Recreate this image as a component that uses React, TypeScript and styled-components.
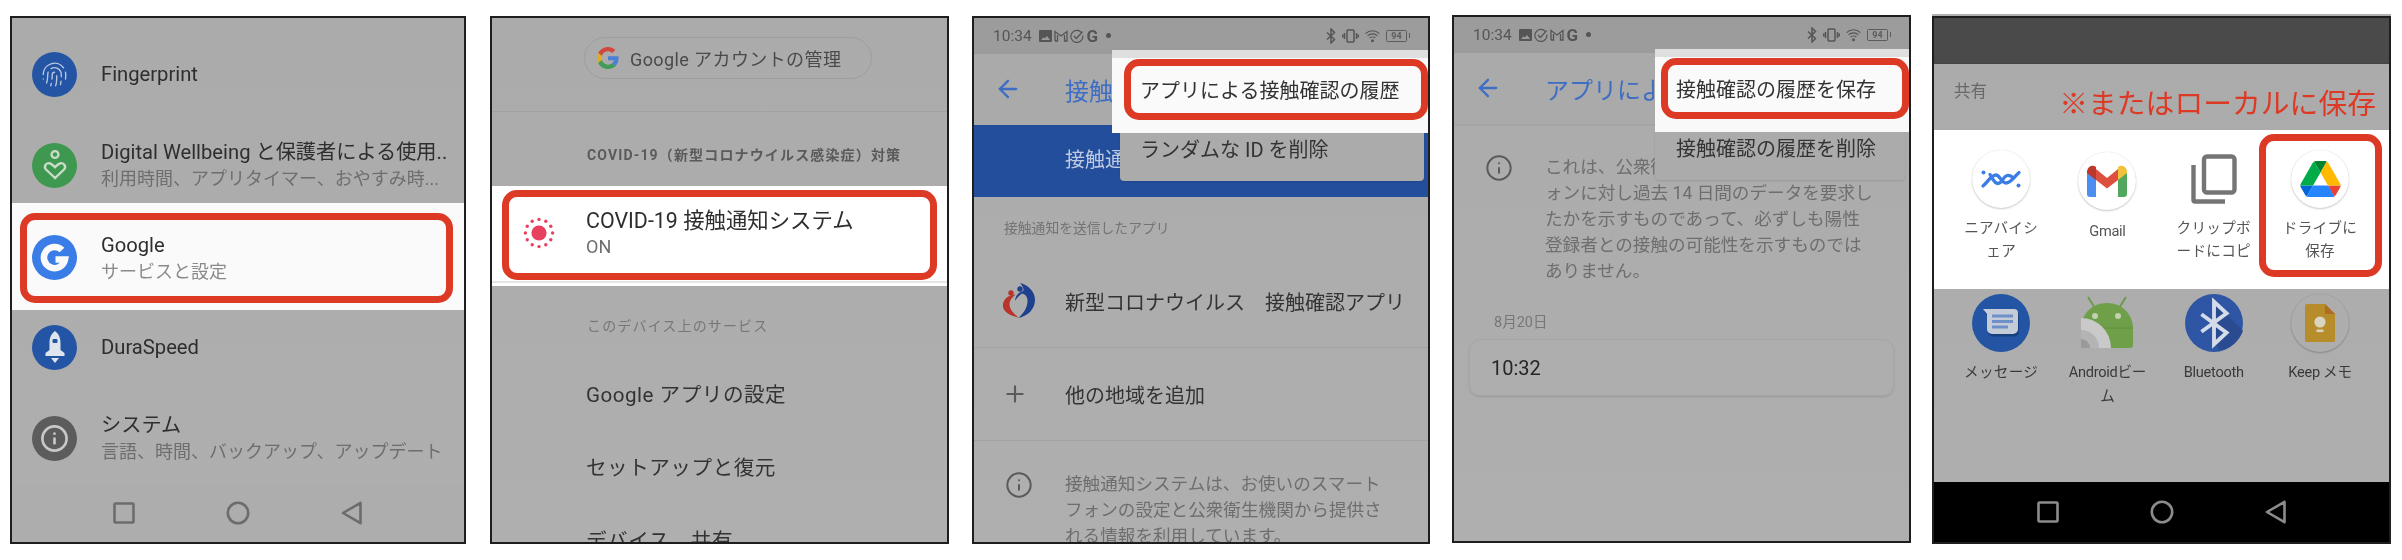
import React from "react";
import styled, { createGlobalStyle } from "styled-components";
import { ArrowLeft, Fingerprint, Info, Plus } from "lucide-react";

const GlobalStyle = createGlobalStyle`
  html, body {
    margin: 0;
    padding: 0;
    background: #fff;
  }
  * {
    box-sizing: border-box;
  }
`;

const RED = "#dd3a26";
const FONT = `Roboto, "Noto Sans CJK JP", sans-serif`;

/* page + frames */
const Page = styled.main`
  display: flex;
  align-items: flex-start;
  width: 2402px;
  height: 560px;
  padding-left: 10px;
  overflow: hidden;
  font-family: ${FONT};
`;

const Frame = styled.section<{ $ml: number; $mt: number; $w: number; $cap?: boolean }>`
  position: relative;
  display: flex;
  flex-direction: column;
  flex: none;
  width: ${(p) => p.$w}px;
  height: 528px;
  margin-left: ${(p) => p.$ml}px;
  margin-top: ${(p) => p.$mt}px;
  border: 2px solid #1e1e1e;
  background: linear-gradient(#ababab, #afafaf);
  overflow: hidden;
  filter: blur(0.45px);
  box-shadow: ${(p) => (p.$cap ? "0 -2px 0 #b0b0b0" : "none")};
`;

const Ring = styled.div`
  flex: 1;
  display: flex;
  align-items: center;
  border: 7px solid ${RED};
  border-radius: 15px;
  background: #fafafa;
`;

/* Frame 1: settings list */
const SettingsList = styled.div`
  display: flex;
  flex-direction: column;
  padding-top: 10.5px;
  flex: 1;
`;

const SettingRow = styled.div`
  display: flex;
  align-items: center;
  gap: 24px;
  height: 91px;
  padding-left: 20px;
`;

const Disc = styled.div<{ $bg: string }>`
  flex: none;
  display: flex;
  align-items: center;
  justify-content: center;
  width: 45px;
  height: 45px;
  border-radius: 50%;
  background: ${(p) => p.$bg};
`;

const RowText = styled.div`
  display: flex;
  flex-direction: column;
  min-width: 0;
  white-space: nowrap;
`;

const Title = styled.div`
  font-size: 20.2px;
  line-height: 27px;
  color: #2e2e2e;
`;

const Sub = styled.div`
  font-size: 18px;
  line-height: 25px;
  color: #6e6e6e;
`;

const SettingBand = styled.div`
  position: relative;
  z-index: 1;
  display: flex;
  height: 107px;
  margin: -8px 0;
  padding: 10px 11px 7px 8px;
  background: #fafafa;

  ${Ring} {
    padding-left: 5px;
    gap: 24px;
  }
  ${Sub} {
    color: #8a8a8a;
  }
`;

const NavBar = styled.nav<{ $bg: string; $h: number }>`
  flex: none;
  display: grid;
  grid-template-columns: repeat(3, 114px);
  justify-content: center;
  justify-items: center;
  align-items: center;
  height: ${(p) => p.$h}px;
  background: ${(p) => p.$bg};
`;

/* Frame 2: Google settings */
const AccountHead = styled.div`
  flex: none;
  height: 94px;
  padding: 18.5px 0 0 92px;
  border-bottom: 1.5px solid #a2a2a2;
`;

const AccountPill = styled.div`
  display: flex;
  align-items: center;
  gap: 11px;
  width: 288px;
  height: 42px;
  padding-left: 12px;
  border: 1px solid #9e9e9e;
  border-radius: 21px;
  font-size: 18px;
  letter-spacing: 0.4px;
  color: #4a4a4a;
  white-space: nowrap;
`;

const SectionLabel = styled.div<{ $h: number; $pt: number; $bold?: boolean }>`
  flex: none;
  display: flex;
  align-items: center;
  height: ${(p) => p.$h}px;
  padding: ${(p) => p.$pt}px 0 0 95px;
  font-size: 14px;
  letter-spacing: 1.15px;
  font-weight: ${(p) => (p.$bold ? 700 : 400)};
  color: ${(p) => (p.$bold ? "#5a5a5a" : "#777")};
  white-space: nowrap;
`;

const CovidBand = styled.div`
  flex: none;
  display: flex;
  flex-direction: column;
  height: 100.5px;
  padding: 4.5px 10px 0;
  background: #fff;

  ${Ring} {
    background: #fff;
    padding: 0 0 4px 14px;
    gap: 31px;
  }
  ${Title} {
    font-size: 21.4px;
  }
  ${Sub} {
    font-size: 18px;
    line-height: 26px;
  }
`;

const BandRule = styled.div`
  flex: none;
  height: 2px;
  margin: 1px -10px 3px;
  background: #e6e6e6;
`;

const PlainRow = styled.div`
  flex: none;
  display: flex;
  align-items: center;
  height: 73px;
  padding-left: 94px;
  font-size: 20.6px;
  letter-spacing: 0.5px;
  color: #333;
  white-space: nowrap;
`;

/* Frame 3 + 4: exposure notification screens */
const StatusBar = styled.div`
  flex: none;
  display: flex;
  align-items: center;
  gap: 2px;
  height: 35.5px;
  padding: 0 18px 0 19px;
  background: #9c9c9c;
  color: #555;
`;

const Clock = styled.span`
  font-size: 15.5px;
  margin-right: 5px;
`;

const StatusG = styled.span`
  font-size: 17px;
  font-weight: 700;
  margin-left: 1px;
`;

const StatusDot = styled.span`
  width: 5px;
  height: 5px;
  margin-left: 6px;
  border-radius: 50%;
  background: #555;
`;

const StatusRight = styled.div`
  display: flex;
  align-items: center;
  gap: 6px;
  margin-left: auto;
`;

const AppBar = styled.header`
  flex: none;
  display: flex;
  align-items: center;
  height: 71.5px;
  padding-left: 20px;
  gap: 43px;
  font-size: 24px;
  color: #3e6ec4;
  background: #aaaaaa;
  box-shadow: 0 1px 2px rgba(0, 0, 0, 0.08);
`;

const AppBarTitle = styled.span<{ $w: number }>`
  width: ${(p) => p.$w}px;
  overflow: hidden;
  white-space: nowrap;
`;

const BlueBanner = styled.div`
  flex: none;
  height: 71.5px;
  padding-left: 91px;
  background: #234e9b;
  color: #bfcbe2;
  font-size: 20px;
  line-height: 71.5px;
`;

const BannerText = styled.span`
  display: block;
  width: 55px;
  overflow: hidden;
  white-space: nowrap;
`;

const GroupLabel = styled.div`
  flex: none;
  display: flex;
  align-items: center;
  height: 58.5px;
  padding: 2.5px 0 0 30px;
  font-size: 13.8px;
  color: #747474;
`;

const ListRow = styled.div<{ $divider?: boolean }>`
  flex: none;
  display: flex;
  align-items: center;
  height: 93px;
  font-size: 20px;
  color: #333;
  white-space: nowrap;
  border-bottom: ${(p) => (p.$divider ? "1.5px solid #a2a2a2" : "none")};
`;

const IconSlot = styled.div<{ $shift?: number }>`
  flex: none;
  display: flex;
  justify-content: center;
  width: 91px;
  padding-right: ${(p) => p.$shift ?? 2}px;
`;

const NoteRow = styled.div<{ $pt: number }>`
  display: flex;
  align-items: flex-start;
  padding-top: ${(p) => p.$pt}px;
  color: #5a5a5a;
`;

const NoteText = styled.p`
  margin: 0;
  width: 345px;
  font-size: 17.6px;
  line-height: 26.2px;
  color: #6e6e6e;
  white-space: nowrap;
`;

const DateLabel = styled.div`
  margin: 28.5px 0 0 40px;
  height: 20px;
  font-size: 14.5px;
  line-height: 20px;
  color: #777;
`;

const HistoryCard = styled.div`
  display: flex;
  align-items: center;
  width: 425px;
  height: 57px;
  margin: 6px 0 0 15px;
  padding-left: 21px;
  border: 1px solid #a6a6a6;
  border-radius: 11px;
  box-shadow: 0 1px 2px rgba(0, 0, 0, 0.12);
  font-size: 20px;
  color: #262626;
`;

const MenuOverlay = styled.div<{ $left: number }>`
  position: absolute;
  z-index: 2;
  left: ${(p) => p.$left}px;
  right: 0;
  top: 32px;
  font-size: 20px;
  color: #333;
  white-space: nowrap;
`;

const MenuBand = styled.div<{ $ringLeft: number; $textLeft: number }>`
  display: flex;
  height: 83px;
  padding: 9px 0 13px ${(p) => p.$ringLeft}px;
  background: linear-gradient(#dfdfdf 0, #dfdfdf 8px, #f9f9f9 8px);

  ${Ring} {
    padding-left: ${(p) => p.$textLeft}px;
  }
`;

const MenuRest = styled.div<{ $inset: number; $textLeft: number }>`
  height: 47.5px;
  margin: 0 4px 0 ${(p) => p.$inset}px;
  padding: 5px 0 0 ${(p) => p.$textLeft}px;
  line-height: 25px;
  background: #ababab;
  border-radius: 0 0 4px 4px;
  box-shadow: 0 1px 2px rgba(0, 0, 0, 0.12);
`;

/* Frame 5: share sheet */
const ShareTop = styled.div`
  flex: none;
  height: 46px;
  background: #4a4a4a;
  border-bottom: 1px solid #444;
`;

const ShareHead = styled.div`
  flex: none;
  display: flex;
  justify-content: space-between;
  align-items: flex-start;
  height: 65.5px;
  padding: 0 13px 0 20px;
`;

const ShareTitle = styled.span`
  margin-top: 16px;
  font-size: 16.5px;
  line-height: 24px;
  color: #686868;
`;

const ShareNote = styled.span`
  margin-top: 21.5px;
  font-size: 28.8px;
  line-height: 36px;
  color: ${RED};
  white-space: nowrap;
`;

const ShareGrid = styled.div<{ $white?: boolean }>`
  flex: none;
  display: grid;
  grid-template-columns: repeat(4, 106.3px);
  padding: ${(p) => (p.$white ? "20px 0 0 14px" : "5.4px 0 0 14px")};
  height: ${(p) => (p.$white ? "159px" : "auto")};
  background: ${(p) => (p.$white ? "#fff" : "transparent")};
`;

const ShareCell = styled.div`
  position: relative;
  display: flex;
  flex-direction: column;
  align-items: center;
`;

const ShareIcon = styled.div<{ $bg?: string; $outline?: boolean; $nudge?: number }>`
  display: flex;
  align-items: center;
  justify-content: center;
  width: 58px;
  height: 58px;
  margin-top: ${(p) => p.$nudge ?? 0}px;
  border-radius: 50%;
  background: ${(p) => p.$bg ?? "transparent"};
  box-shadow: ${(p) => (p.$outline ? "0 1px 2px rgba(0,0,0,.2), 0 0 1px rgba(0,0,0,.15)" : "none")};
`;

const ShareLabel = styled.div<{ $dim?: boolean; $narrow?: boolean }>`
  margin-top: 9.5px;
  font-size: 14.6px;
  line-height: 23.4px;
  letter-spacing: ${(p) => (p.$narrow ? "-0.3px" : "0.3px")};
  text-align: center;
  white-space: nowrap;
  color: ${(p) => (p.$dim ? "#3a3a3a" : "#555")};
`;

const CellRing = styled.div`
  position: absolute;
  left: -8px;
  right: -9px;
  top: -15.5px;
  height: 143px;
  border: 7px solid ${RED};
  border-radius: 15px;
`;

const Spacer = styled.div`
  flex: 1;
`;

/* icons */
const GoogleDisc = () => (
  <Disc $bg="#3a7de6">
    <svg width="45" height="45" viewBox="0 0 45 45">
      <path d="M30 15A10.6 10.6 0 1 0 33 24.5H23.5" fill="none" stroke="#fafafa" strokeWidth="6.6" />
    </svg>
  </Disc>
);

const WellbeingGlyph = () => (
  <svg width="26" height="32" viewBox="0 0 26 32" fill="none" stroke="#c9dbc9" strokeWidth="2.4">
    <circle cx="13" cy="5.5" r="3.4" />
    <path d="M13 29 L4 20.5 C1.5 18 3.8 13.6 7.4 14.2 C10 14.6 11.5 16.6 13 18.2 C14.5 16.6 16 14.6 18.6 14.2 C22.2 13.6 24.5 18 22 20.5 Z" />
  </svg>
);

const RocketGlyph = () => (
  <svg width="24" height="34" viewBox="0 0 24 34">
    <path d="M12 1 C16 4 17.5 8 17.5 13 V20 L21.5 23 V26 H2.5 V23 L6.5 20 V13 C6.5 8 8 4 12 1Z" fill="#dfe5ef" />
    <rect x="9.5" y="9" width="5" height="4" rx="1" fill="#2455a4" />
    <path d="M8 28 H16 L12 33Z" fill="#dfe5ef" />
  </svg>
);

const SquareKey = ({ color }: { color: string }) => (
  <svg width="24" height="24" viewBox="0 0 24 24">
    <rect x="2.5" y="2.5" width="19" height="19" rx="1" fill="none" stroke={color} strokeWidth="2.6" />
  </svg>
);

const CircleKey = ({ color }: { color: string }) => (
  <svg width="24" height="24" viewBox="0 0 24 24">
    <circle cx="12" cy="12" r="10.2" fill="none" stroke={color} strokeWidth="2.6" />
  </svg>
);

const BackKey = ({ color }: { color: string }) => (
  <svg width="24" height="24" viewBox="0 0 24 24">
    <path d="M20.5 1.8V22.2L3 12Z" fill="none" stroke={color} strokeWidth="2.6" strokeLinejoin="round" />
  </svg>
);

const GoogleG = () => (
  <svg width="22" height="22" viewBox="0 0 48 48" opacity="0.85">
    <path fill="#d8382c" d="M24 9.5c3.54 0 6.71 1.22 9.21 3.6l6.85-6.85C35.9 2.38 30.47 0 24 0 14.62 0 6.51 5.38 2.56 13.22l7.98 6.19C12.43 13.72 17.74 9.5 24 9.5z" />
    <path fill="#3a78dc" d="M46.98 24.55c0-1.57-.15-3.09-.38-4.55H24v9.02h12.94c-.58 2.96-2.26 5.48-4.78 7.18l7.73 6c4.51-4.18 7.09-10.36 7.09-17.65z" />
    <path fill="#e8ae10" d="M10.53 28.59c-.48-1.45-.76-2.99-.76-4.59s.27-3.14.76-4.59l-7.98-6.19C.92 16.46 0 20.12 0 24c0 3.88.92 7.54 2.56 10.78l7.97-6.19z" />
    <path fill="#2f9a4a" d="M24 48c6.48 0 11.93-2.13 16.03-5.81l-7.73-6c-2.15 1.45-4.92 2.3-8.3 2.3-6.26 0-11.57-4.22-13.47-9.91l-7.98 6.19C6.51 42.62 14.62 48 24 48z" />
  </svg>
);

const CovidSun = () => (
  <svg width="32" height="32" viewBox="0 0 32 32">
    <circle cx="16" cy="16" r="7.6" fill="#e8405f" />
    {Array.from({ length: 12 }, (_, i) => {
      const a = (i * Math.PI) / 6;
      return <circle key={i} cx={16 + 13.6 * Math.cos(a)} cy={16 + 13.6 * Math.sin(a)} r="1.7" fill="#e8405f" />;
    })}
  </svg>
);

const PictureMark = () => (
  <svg width="13" height="12" viewBox="0 0 13 12">
    <path d="M0 1 Q0 0 1 0 H12 Q13 0 13 1 V11 Q13 12 12 12 H1 Q0 12 0 11Z M2 10 H11 L8 6 L6 8.5 L4.8 7.2Z" fill="#555" fillRule="evenodd" />
  </svg>
);

const GmailMark = () => (
  <svg width="14" height="12" viewBox="0 0 14 12" fill="none" stroke="#555" strokeWidth="1.3">
    <path d="M1 11V1.5L7 6L13 1.5V11H10.5V5M1 11H3.5V5" />
  </svg>
);

const CheckMark = () => (
  <svg width="14" height="14" viewBox="0 0 14 14" fill="none" stroke="#555" strokeWidth="1.2">
    <path d="M11.5 3.6A6 6 0 1 0 12.8 6.5" />
    <path d="M4 7L6.4 9.4L12.6 2.6" strokeWidth="1.4" />
  </svg>
);

const BluetoothMark = () => (
  <svg width="10" height="16" viewBox="0 0 10 16" fill="none" stroke="#555" strokeWidth="1.5">
    <path d="M1 4.5L8.5 11.5L5 15V1L8.5 4.5L1 11.5" />
  </svg>
);

const VibrateMark = () => (
  <svg width="17" height="14" viewBox="0 0 17 14" fill="none" stroke="#555" strokeWidth="1.5">
    <rect x="5" y="1" width="7" height="12" rx="1" />
    <path d="M2.5 4V10M14.5 4V10M0.7 5.5V8.5M16.3 5.5V8.5" />
  </svg>
);

const WifiMark = () => (
  <svg width="15" height="14" viewBox="0 0 15 14" fill="none" stroke="#555" strokeWidth="1.1">
    <path d="M0.6 4.6C4.5 0.8 10.5 0.8 14.4 4.6" />
    <path d="M2.6 6.8C5.3 4.2 9.7 4.2 12.4 6.8" />
    <path d="M4.7 9C6.2 7.6 8.8 7.6 10.3 9" />
    <circle cx="7.5" cy="11.8" r="1.5" fill="#555" stroke="none" />
  </svg>
);

const BatteryBox = styled.span`
  position: relative;
  display: flex;
  align-items: center;
  justify-content: center;
  width: 21px;
  height: 12px;
  margin-right: 3px;
  border: 1.2px solid #5c5c5c;
  border-radius: 1.5px;
  font-size: 9px;
  font-weight: 700;
  color: #5c5c5c;

  &::after {
    content: "";
    position: absolute;
    right: -4px;
    top: 2px;
    width: 1.5px;
    height: 5px;
    background: #5c5c5c;
  }
`;

const AppLogo = () => (
  <svg width="34" height="36" viewBox="0 0 34 36">
    <circle cx="9" cy="10" r="2.7" fill="#b8342c" />
    <path d="M13.5 11.5C8 11.5 2 15 1 21C0 27 5 32 16.5 34.5C11 30 7.5 26 7.5 21C7.5 17.5 10 14.5 13.5 11.5Z" fill="#b8342c" />
    <circle cx="18" cy="6" r="2.7" fill="#1f3f8f" />
    <path d="M18 0C27 2.5 33 9 33 17C33 26 26 33 16.5 35C22 30 25.5 24 25.5 18C25.5 14 24 11.5 20 10.5C18 12 15.5 14 13 18C13.5 13 16 9.5 21 8C22.5 7.5 21 3 18 0Z" fill="#1f3f8f" />
  </svg>
);

const NearbyGlyph = () => (
  <svg width="42" height="20" viewBox="0 0 42 20" fill="none" stroke="#3a7de6" strokeWidth="3.3" strokeLinecap="round">
    <path d="M3 17C8 13 11 6 16 6C20 6 21 14 26 14C31 14 34 8 39 3.5" />
    <path d="M10 5.5C12 8 14 14.5 18 14.5C22 14.5 23 7.5 27 6.5C29 6 31 7 33 8.5" />
    <circle cx="3.5" cy="3.5" r="2" fill="#3a7de6" stroke="none" />
    <circle cx="38.5" cy="16.5" r="2" fill="#3a7de6" stroke="none" />
  </svg>
);

const GmailGlyph = () => (
  <svg width="40" height="32" viewBox="0 0 40 32">
    <path d="M0 7V29A3 3 0 0 0 3 32H9V13Z" fill="#4d8ef0" />
    <path d="M31 13V32H37A3 3 0 0 0 40 29V7Z" fill="#52a75f" />
    <path d="M9 4L20 13L31 4V15L20 23.5L9 15Z" fill="#dd4f3f" />
    <path d="M0 7C0 2 5 -1 9 2V15L0 8Z" fill="#bd372b" />
    <path d="M31 2C35 -1 40 2 40 7V8L31 15Z" fill="#f2c13c" />
  </svg>
);

const CopyGlyph = () => (
  <svg width="46" height="50" viewBox="0 0 46 50" fill="none" stroke="#757575" strokeWidth="4.4">
    <rect x="13" y="2.5" width="30.5" height="36" rx="3" />
    <path d="M2.5 11V46A1.5 1.5 0 0 0 4 47.5H34" />
  </svg>
);

const DriveGlyph = () => (
  <svg width="41" height="36" viewBox="0 0 87.3 78">
    <path d="m6.6 66.85 3.85 6.65c.8 1.4 1.95 2.5 3.3 3.3l13.75-23.8h-27.5c0 1.55.4 3.1 1.2 4.5z" fill="#0066da" />
    <path d="m43.65 25-13.75-23.8c-1.35.8-2.5 1.9-3.3 3.3l-25.4 44a9.06 9.06 0 0 0 -1.2 4.5h27.5z" fill="#00ac47" />
    <path d="m73.55 76.8c1.35-.8 2.5-1.9 3.3-3.3l1.6-2.75 7.65-13.25c.8-1.4 1.2-2.95 1.2-4.5h-27.502l5.852 11.5z" fill="#ea4335" />
    <path d="m43.65 25 13.75-23.8c-1.35-.8-2.9-1.2-4.5-1.2h-18.5c-1.6 0-3.15.45-4.5 1.2z" fill="#00832d" />
    <path d="m59.8 53h-32.3l-13.75 23.8c1.35.8 2.9 1.2 4.5 1.2h50.8c1.6 0 3.15-.45 4.5-1.2z" fill="#2684fc" />
    <path d="m73.4 26.5-12.7-22c-.8-1.4-1.95-2.5-3.3-3.3l-13.75 23.8 16.15 28h27.45c0-1.55-.4-3.1-1.2-4.5z" fill="#ffba00" />
  </svg>
);

const MessagesGlyph = () => (
  <svg width="36" height="28" viewBox="0 0 36 28">
    <path d="M0 1H31A4 4 0 0 1 35 5V21A5 5 0 0 1 30 26H9A5 5 0 0 1 4 21V6Z" fill="#17407f" transform="translate(1 1.5)" />
    <path d="M0 0H31A4 4 0 0 1 35 4V20A5 5 0 0 1 30 25H9A5 5 0 0 1 4 20V5Z" fill="#c4ccd8" />
    <path d="M9 7H30M9 12.5H30M9 18H25" stroke="#6f8fc8" strokeWidth="2.8" />
  </svg>
);

const AndroidGlyph = () => (
  <svg width="54" height="54" viewBox="0 0 54 54">
    <path d="M8 1L15 12M46 1L39 12" stroke="#6c9a45" strokeWidth="2" />
    <path d="M1 51V33C1 18 12 7 27 7S53 18 53 33V49A3 3 0 0 1 50 52H1Z" fill="#6f9f49" />
    <circle cx="15" cy="20" r="3" fill="#c2cfb0" />
    <circle cx="38" cy="20" r="3" fill="#c2cfb0" />
    <path d="M1 32H53" stroke="#62903f" strokeWidth="1" />
    <path d="M1 22A30 30 0 0 1 31 52H1Z" fill="#c9c9c9" />
    <path d="M1 34A18 18 0 0 1 19 52H1Z" fill="#b4b4b4" />
    <path d="M1 43A9 9 0 0 1 10 52H1Z" fill="#9a9a9a" />
  </svg>
);

const BluetoothGlyph = () => (
  <svg width="60" height="60" viewBox="0 0 60 60">
    <circle cx="30" cy="30" r="30" fill="#2f55a5" />
    <path d="M32 10L60 38A30 30 0 0 1 36 58L30 50Z" fill="#2a4b90" />
    <path d="M17 21L43 40L30 52V8L43 20L17 39" fill="none" stroke="#d5dce9" strokeWidth="4" />
  </svg>
);

const KeepGlyph = () => (
  <svg width="30" height="38" viewBox="0 0 30 38">
    <path d="M2 0H20L30 10V36A2 2 0 0 1 28 38H2A2 2 0 0 1 0 36V2A2 2 0 0 1 2 0Z" fill="#b78d2c" />
    <path d="M20 0L30 10H20Z" fill="#b06c22" />
    <circle cx="15" cy="18" r="5.6" fill="#d9d4c0" />
    <rect x="11.5" y="25.5" width="7" height="2.6" fill="#d9d4c0" />
  </svg>
);

const Nav = ({ bg, color, h }: { bg: string; color: string; h: number }) => (
  <NavBar $bg={bg} $h={h}>
    <SquareKey color={color} />
    <CircleKey color={color} />
    <BackKey color={color} />
  </NavBar>
);

const Status = ({ swap }: { swap?: boolean }) => (
  <StatusBar>
    <Clock>10:34</Clock>
    <PictureMark />
    {swap ? <CheckMark /> : <GmailMark />}
    {swap ? <GmailMark /> : <CheckMark />}
    <StatusG>G</StatusG>
    <StatusDot />
    <StatusRight>
      <BluetoothMark />
      <VibrateMark />
      <WifiMark />
      <BatteryBox>94</BatteryBox>
    </StatusRight>
  </StatusBar>
);

const SettingsFrame = () => (
  <Frame $ml={0} $mt={16} $w={456}>
    <SettingsList>
      <SettingRow>
        <Disc $bg="#2455a4">
          <Fingerprint size={27} strokeWidth={1.2} color="#b9c8e0" />
        </Disc>
        <RowText>
          <Title>Fingerprint</Title>
        </RowText>
      </SettingRow>
      <SettingRow>
        <Disc $bg="#3f9850">
          <WellbeingGlyph />
        </Disc>
        <RowText>
          <Title>Digital Wellbeing と保護者による使用..</Title>
          <Sub>利用時間、アプリタイマー、おやすみ時...</Sub>
        </RowText>
      </SettingRow>
      <SettingBand>
        <Ring>
          <GoogleDisc />
          <RowText>
            <Title>Google</Title>
            <Sub>サービスと設定</Sub>
          </RowText>
        </Ring>
      </SettingBand>
      <SettingRow>
        <Disc $bg="#2455a4">
          <RocketGlyph />
        </Disc>
        <RowText>
          <Title>DuraSpeed</Title>
        </RowText>
      </SettingRow>
      <SettingRow>
        <Disc $bg="#5c5c5c">
          <Info size={29} strokeWidth={2.2} color="#c8c8c8" />
        </Disc>
        <RowText>
          <Title>システム</Title>
          <Sub>言語、時間、バックアップ、アップデート</Sub>
        </RowText>
      </SettingRow>
    </SettingsList>
    <Nav bg="#adadad" color="#6c6c6c" h={59} />
  </Frame>
);

const GoogleFrame = () => (
  <Frame $ml={24} $mt={16} $w={459}>
    <AccountHead>
      <AccountPill>
        <GoogleG />
        Google アカウントの管理
      </AccountPill>
    </AccountHead>
    <SectionLabel $h={73.5} $pt={10.5} $bold>
      COVID-19（新型コロナウイルス感染症）対策
    </SectionLabel>
    <CovidBand>
      <Ring>
        <CovidSun />
        <RowText>
          <Title>COVID-19 接触通知システム</Title>
          <Sub>ON</Sub>
        </RowText>
      </Ring>
      <BandRule />
    </CovidBand>
    <SectionLabel $h={70.5} $pt={7.5}>
      このデバイス上のサービス
    </SectionLabel>
    <PlainRow>Google アプリの設定</PlainRow>
    <PlainRow>セットアップと復元</PlainRow>
    <PlainRow>デバイス、共有</PlainRow>
  </Frame>
);

const ExposureFrame = () => (
  <Frame $ml={23} $mt={16} $w={458}>
    <Status />
    <AppBar>
      <ArrowLeft size={28} strokeWidth={2} />
      <AppBarTitle $w={55}>接触通知システム</AppBarTitle>
    </AppBar>
    <BlueBanner>
      <BannerText>接触通知はオンです</BannerText>
    </BlueBanner>
    <GroupLabel>接触通知を送信したアプリ</GroupLabel>
    <ListRow $divider>
      <IconSlot>
        <AppLogo />
      </IconSlot>
      新型コロナウイルス　接触確認アプリ
    </ListRow>
    <ListRow $divider>
      <IconSlot $shift={10}>
        <Plus size={26} strokeWidth={2} color="#5a5a5a" />
      </IconSlot>
      他の地域を追加
    </ListRow>
    <NoteRow $pt={30}>
      <IconSlot>
        <Info size={28} strokeWidth={1.7} />
      </IconSlot>
      <NoteText>
        接触通知システムは、お使いのスマート
        <br />
        フォンの設定と公衆衛生機関から提供さ
        <br />
        れる情報を利用しています。
      </NoteText>
    </NoteRow>
    <MenuOverlay $left={138}>
      <MenuBand $ringLeft={12} $textLeft={9}>
        <Ring>アプリによる接触確認の履歴</Ring>
      </MenuBand>
      <MenuRest $inset={8} $textLeft={20}>
        ランダムな ID を削除
      </MenuRest>
    </MenuOverlay>
  </Frame>
);

const HistoryFrame = () => (
  <Frame $ml={22} $mt={15} $w={459}>
    <Status swap />
    <AppBar>
      <ArrowLeft size={28} strokeWidth={2} />
      <AppBarTitle $w={109}>アプリによる接触確認の履歴</AppBarTitle>
    </AppBar>
    <NoteRow $pt={29.5}>
      <IconSlot>
        <Info size={28} strokeWidth={1.7} />
      </IconSlot>
      <NoteText>
        これは、公衆衛生機関がスマートフ
        <br />
        ォンに対し過去 14 日間のデータを要求し
        <br />
        たかを示すものであって、必ずしも陽性
        <br />
        登録者との接触の可能性を示すものでは
        <br />
        ありません。
      </NoteText>
    </NoteRow>
    <DateLabel>8月20日</DateLabel>
    <HistoryCard>10:32</HistoryCard>
    <MenuOverlay $left={201}>
      <MenuBand $ringLeft={6} $textLeft={8}>
        <Ring>接触確認の履歴を保存</Ring>
      </MenuBand>
      <MenuRest $inset={0} $textLeft={21}>
        接触確認の履歴を削除
      </MenuRest>
    </MenuOverlay>
  </Frame>
);

const ShareFrame = () => (
  <Frame $ml={21} $mt={16} $w={459} $cap>
    <ShareTop />
    <ShareHead>
      <ShareTitle>共有</ShareTitle>
      <ShareNote>※またはローカルに保存</ShareNote>
    </ShareHead>
    <ShareGrid $white>
      <ShareCell>
        <ShareIcon $bg="#fff" $outline>
          <NearbyGlyph />
        </ShareIcon>
        <ShareLabel>
          ニアバイシ
          <br />
          ェア
        </ShareLabel>
      </ShareCell>
      <ShareCell>
        <ShareIcon $bg="#fff" $outline $nudge={2.5}>
          <GmailGlyph />
        </ShareIcon>
        <ShareLabel $narrow>Gmail</ShareLabel>
      </ShareCell>
      <ShareCell>
        <ShareIcon>
          <CopyGlyph />
        </ShareIcon>
        <ShareLabel>
          クリップボ
          <br />
          ードにコピ
        </ShareLabel>
      </ShareCell>
      <ShareCell>
        <ShareIcon $bg="#fff" $outline>
          <DriveGlyph />
        </ShareIcon>
        <ShareLabel>
          ドライブに
          <br />
          保存
        </ShareLabel>
        <CellRing />
      </ShareCell>
    </ShareGrid>
    <ShareGrid>
      <ShareCell>
        <ShareIcon $bg="#2455a4">
          <MessagesGlyph />
        </ShareIcon>
        <ShareLabel $dim>メッセージ</ShareLabel>
      </ShareCell>
      <ShareCell>
        <ShareIcon>
          <AndroidGlyph />
        </ShareIcon>
        <ShareLabel $dim $narrow>
          Androidビー
          <br />ム
        </ShareLabel>
      </ShareCell>
      <ShareCell>
        <ShareIcon>
          <BluetoothGlyph />
        </ShareIcon>
        <ShareLabel $dim $narrow>
          Bluetooth
        </ShareLabel>
      </ShareCell>
      <ShareCell>
        <ShareIcon $outline>
          <KeepGlyph />
        </ShareIcon>
        <ShareLabel $dim $narrow>
          Keep メモ
        </ShareLabel>
      </ShareCell>
    </ShareGrid>
    <Spacer />
    <Nav bg="#000" color="#8c8c8c" h={60} />
  </Frame>
);

export default function App() {
  return (
    <>
      <GlobalStyle />
      <Page>
        <SettingsFrame />
        <GoogleFrame />
        <ExposureFrame />
        <HistoryFrame />
        <ShareFrame />
      </Page>
    </>
  );
}
